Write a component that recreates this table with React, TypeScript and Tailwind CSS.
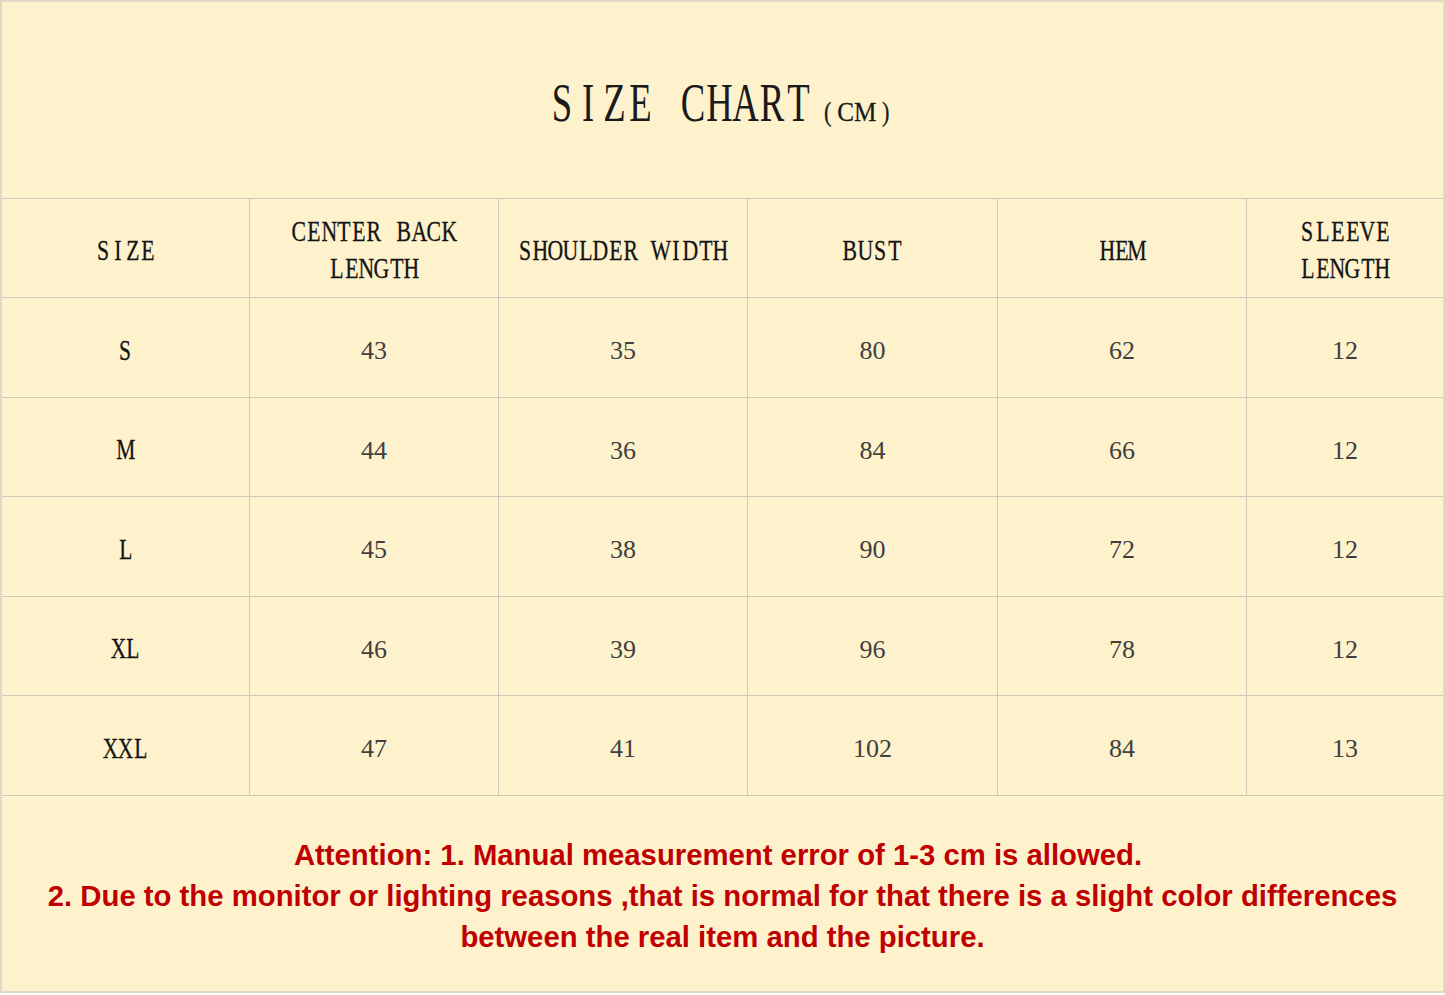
const headers = [
  ['SIZE'],
  ['CENTER BACK', 'LENGTH'],
  ['SHOULDER WIDTH'],
  ['BUST'],
  ['HEM'],
  ['SLEEVE', 'LENGTH'],
];

const rows = [
  ['S', '43', '35', '80', '62', '12'],
  ['M', '44', '36', '84', '66', '12'],
  ['L', '45', '38', '90', '72', '12'],
  ['XL', '46', '39', '96', '78', '12'],
  ['XXL', '47', '41', '102', '84', '13'],
];

const serif = "font-['Liberation_Serif','Times_New_Roman',serif]";

// the chart uses a narrow fixed-pitch serif, so every letter sits in a cell of its own
function Mono({ text, cell, glyph }: { text: string; cell: string; glyph: string }) {
  return (
    <span className="inline-flex whitespace-nowrap">
      {text.split('').map((ch, i) => (
        <span key={i} className={`${cell} inline-flex justify-center`}>
          <span className={`inline-block ${glyph}`}>{ch === ' ' ? '\u00a0' : ch}</span>
        </span>
      ))}
    </span>
  );
}

const cols = ['w-[248px]', 'w-[249px]', 'w-[249px]', 'w-[250px]', 'w-[249px]', 'flex-1'];

export default function App() {
  return (
    <div className="w-[1445px] h-[995px] bg-white">
      <div className="w-[1445px] h-[993px] bg-[#fef2cd] border-2 border-[#e0d9c6] flex flex-col">
        {/* title */}
        <div className="h-[196px] flex items-center justify-center pt-[6px]">
          <h1 className={`${serif} text-[#1a1a1a] flex items-baseline -translate-x-[3px]`}>
            <span className="text-[54px] leading-none">
              <Mono text="SIZE CHART" cell="w-[26.3px]" glyph="scale-x-[0.68]" />
            </span>
            <span className="ml-[12px] text-[28px] leading-none flex items-baseline [-webkit-text-stroke:0.3px_#1a1a1a]">
              <span className="inline-block scale-x-[0.8]">(</span>
              <span className="ml-[2px] mr-[3px] inline-block scale-x-[0.9]">CM</span>
              <span className="inline-block scale-x-[0.8]">)</span>
            </span>
          </h1>
        </div>

        {/* table */}
        <div className="flex flex-col border-t border-[#cfc8b6]">
          <div className="flex h-[99px] border-b border-[#cfc8b6]">
            {headers.map((lines, i) => (
              <div
                key={i}
                className={`${cols[i]} flex flex-col items-center justify-center pt-[4px] ${i < 5 ? 'border-r border-[#cfc8b6]' : ''} ${serif} text-[29px] leading-[37px] text-[#141414] [-webkit-text-stroke:0.3px_#141414]`}
              >
                {lines.map((l) => (
                  <Mono key={l} text={l} cell="w-[15px]" glyph="scale-x-[0.75]" />
                ))}
              </div>
            ))}
          </div>
          {rows.map((row, r) => (
            <div
              key={r}
              className={`flex ${r % 2 === 0 ? 'h-[100px]' : 'h-[99px]'} border-b border-[#cfc8b6]`}
            >
              {row.map((v, c) => (
                <div
                  key={c}
                  className={`${cols[c]} flex items-center justify-center pt-[6px] ${c < 5 ? 'border-r border-[#cfc8b6]' : ''} ${serif}`}
                >
                  {c === 0 ? (
                    <span className="text-[29px] text-[#141414] [-webkit-text-stroke:0.3px_#141414]">
                      <Mono text={v} cell="w-[15px]" glyph="scale-x-[0.74]" />
                    </span>
                  ) : (
                    <span className="text-[26px] text-[#404040]">{v}</span>
                  )}
                </div>
              ))}
            </div>
          ))}
        </div>

        {/* note */}
        <div className="flex-1 flex items-center justify-center pt-[4px]">
          <div className="flex flex-col items-center font-['Liberation_Sans',Arial,sans-serif] font-bold text-[29.3px] leading-[41px] text-[#c00000] whitespace-nowrap">
            <p className="pr-[9px]">Attention: 1. Manual measurement error of 1-3 cm is allowed.</p>
            <p>2. Due to the monitor or lighting reasons ,that is normal for that there is a slight color differences</p>
            <p>between the real item and the picture.</p>
          </div>
        </div>
      </div>
    </div>
  );
}
